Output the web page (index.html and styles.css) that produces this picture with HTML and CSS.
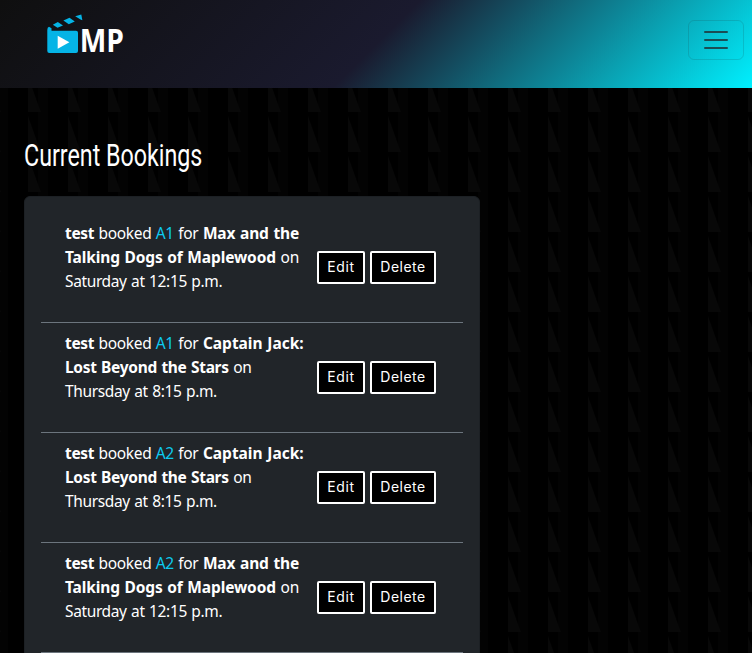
FILE: index.html
```html
<!DOCTYPE html>
<html lang="en">
<head>
<meta charset="utf-8">
<title>Current Bookings</title>
<link rel="stylesheet" href="styles.css">
</head>
<body>
<header class="navbar">
  <a class="brand" aria-label="MP">
    <svg width="90" height="60" viewBox="0 0 90 60">
      <g fill="#05b4e6">
        <path d="M1.3 16Q1.3 13.4 3 12.8L5.5 14.2V16.7H30Q32 16.7 32 18.7V37Q32 39 30 39H3.3Q1.3 39 1.3 37Z"/>
        <path d="M6.8 10.8L11.8 8L17 11.5L11.5 13.8Z"/>
        <path d="M17.4 6.6L23.5 3.8L28.8 7.4L22.8 10.2Z"/>
        <path d="M29.2 2.2L35.3 .4L36.4 6.2L34.5 5.6Z"/>
      </g>
      <path fill="#fff" d="M11.7 21.7V34.7L23.4 28.2Z"/>
      <text class="brand-text" x="33.8" y="37.8" textLength="44.2" lengthAdjust="spacingAndGlyphs">MP</text>
    </svg>
  </a>
  <button class="toggler" aria-label="Menu">
    <svg width="30" height="30" viewBox="0 0 30 30"><path d="M4 7h22M4 15h22M4 23h22" stroke="rgba(33,37,41,.75)" stroke-width="2" stroke-linecap="round" stroke-miterlimit="10"/></svg>
  </button>
</header>
<main class="content">
  <h2 class="title"><span>Current Bookings</span></h2>
  <section class="card">
    <article class="booking">
      <p class="sat"><span class="l1"><b>test</b> booked <i>A1</i> for <b>Max and the</b></span><span class="l2"><b>Talking Dogs of Maplewood</b> on</span><span class="l3">Saturday at 12:15 p.m.</span></p>
      <div class="actions"><button class="btn edit">Edit</button><button class="btn delete">Delete</button></div>
    </article>
    <article class="booking">
      <p class="thu"><span class="l1"><b>test</b> booked <i>A1</i> for <b>Captain Jack:</b></span><span class="l2"><b>Lost Beyond the Stars</b> on</span><span class="l3">Thursday at 8:15 p.m.</span></p>
      <div class="actions"><button class="btn edit">Edit</button><button class="btn delete">Delete</button></div>
    </article>
    <article class="booking">
      <p class="thu"><span class="l1"><b>test</b> booked <i>A2</i> for <b>Captain Jack:</b></span><span class="l2"><b>Lost Beyond the Stars</b> on</span><span class="l3">Thursday at 8:15 p.m.</span></p>
      <div class="actions"><button class="btn edit">Edit</button><button class="btn delete">Delete</button></div>
    </article>
    <article class="booking">
      <p class="sat"><span class="l1"><b>test</b> booked <i>A2</i> for <b>Max and the</b></span><span class="l2"><b>Talking Dogs of Maplewood</b> on</span><span class="l3">Saturday at 12:15 p.m.</span></p>
      <div class="actions"><button class="btn edit">Edit</button><button class="btn delete">Delete</button></div>
    </article>
  </section>
</main>
</body>
</html>
```
FILE: styles.css
```css
* { box-sizing: border-box; }
html { height: 100%; overflow: hidden; }
body {
  margin: 0;
  height: 100%;
  overflow: hidden;
  color: #fff;
  font-family: "Noto Sans", "Open Sans", sans-serif;
  background: #000 url("data:image/svg+xml,%3Csvg xmlns='http://www.w3.org/2000/svg' width='40' height='40'%3E%3Cpath fill='%23030303' d='M0 0h8v40H0zM38 0h2v40h-2z'/%3E%3Cpath fill='%23080808' d='M28 0V32H40V30L29.3 0zM0 30L1 32H0zM28 36L29.3 40H28z'/%3E%3C/svg%3E");
}
.navbar {
  display: flex;
  justify-content: space-between;
  align-items: flex-start;
  height: 88px;
  padding: 14px 8px 0 46px;
  background: linear-gradient(135deg, #0f0f0f, #1a1a2e 50%, #00f0ff);
}
.brand, .brand svg { display: block; }
.brand-text { font: 700 33px "Open Sans", sans-serif; fill: #fff; }
.toggler {
  width: 56px;
  height: 40px;
  margin-top: 6px;
  padding: 4px 12px;
  border: 1px solid rgba(33, 37, 41, .15);
  border-radius: 6px;
  background: transparent;
}
.toggler svg { display: block; }
.content { padding: 49px 24px 0; }
.title {
  height: 38px;
  margin: 0 0 21px;
  font: 400 31px/38px Roboto, sans-serif;
}
.title span { display: inline-block; transform: scaleX(.75); transform-origin: 0 50%; }
.card {
  width: 456px;
  padding: 16px;
  border: 1px solid #1c2024;
  border-radius: 6px;
  background: #212529;
}
.booking {
  display: flex;
  height: 110px;
  padding: 8px 0 0 24px;
  border-bottom: 1px solid #6c757d;
}
.booking p {
  width: 252px;
  margin: 0;
  font-size: 15.5px;
  line-height: 24px;
}
.booking p span { display: block; width: max-content; white-space: nowrap; }
.booking i { font-style: normal; color: #0dcaf0; }
.l1 { letter-spacing: -.35px; word-spacing: .8px; }
.l1 b:last-child { letter-spacing: -.15px; }
.sat .l2 { letter-spacing: -.12px; word-spacing: .7px; }
.thu .l1 b:last-child { letter-spacing: -.02px; }
.thu .l2 { letter-spacing: -.3px; word-spacing: .7px; }
.l3 { letter-spacing: -.37px; word-spacing: .8px; }
.actions { display: flex; gap: 5px; padding-top: 30px; }
.btn {
  height: 33px;
  padding: 0 0 2px;
  border: 2px solid #fff;
  border-radius: 2px;
  background: #000;
  color: #fff;
  font: 400 14px Inter, sans-serif;
  white-space: nowrap;
}
.edit { width: 48px; letter-spacing: .6px; }
.delete { width: 66px; letter-spacing: .5px; }
```
